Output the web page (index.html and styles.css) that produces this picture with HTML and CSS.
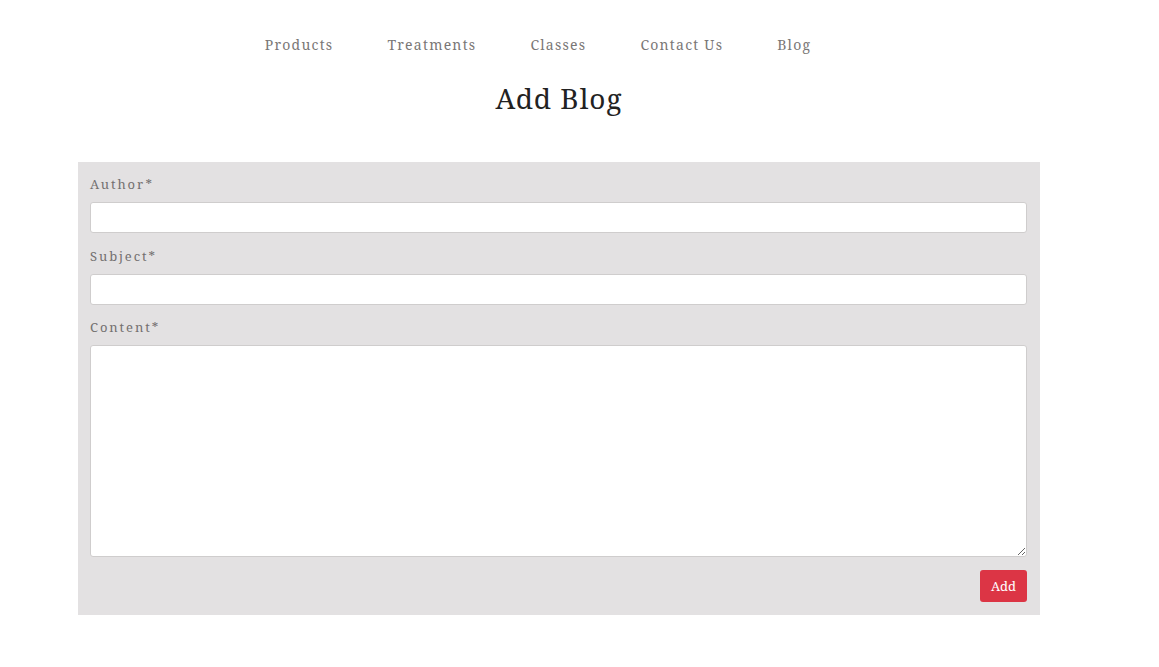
FILE: index.html
```html
<!DOCTYPE html>
<html>
<head>
<meta charset="utf-8">
<link rel="stylesheet" href="styles.css">
</head>
<body>
<div class="page">
  <nav class="nav">
    <a href="#">Products</a>
    <a href="#">Treatments</a>
    <a href="#">Classes</a>
    <a href="#">Contact Us</a>
    <a href="#">Blog</a>
  </nav>
  <h1 class="title">Add Blog</h1>
  <form class="panel">
    <label class="label">Author*</label>
    <input class="field" type="text">
    <label class="label">Subject*</label>
    <input class="field" type="text">
    <label class="label">Content*</label>
    <textarea class="field area"></textarea>
    <div class="actions"><button type="button" class="btn">Add</button></div>
  </form>
</div>
</body>
</html>
```
FILE: styles.css
```css
* { box-sizing: border-box; }
html, body { margin: 0; padding: 0; background: #fff; }
body { font-family: "Noto Serif", "Droid Serif", "DejaVu Serif", serif; }
.page { width: 962px; margin-left: 78px; padding-top: 36px; }
.nav { display: flex; justify-content: center; gap: 54px; padding-right: 42px; }
.nav a { color: #7a7776; text-decoration: none; font-size: 14px; letter-spacing: 1.25px; line-height: 18px; }
.title { margin: 27px 0 0; text-align: center; font-weight: 400; font-size: 28px; line-height: 34px; letter-spacing: 1px; color: #222; }
.panel { margin-top: 47px; background: #e3e1e2; padding: 13px 13px 13px 12px; display: flex; flex-direction: column; }
.label { font-size: 13px; letter-spacing: 1.9px; color: #737070; line-height: 18px; margin-bottom: 9px; }
.field { display: block; width: 100%; height: 31px; border: 1px solid #cfcdcd; border-radius: 3px; background: #fff; margin: 0 0 13.5px; font: inherit; padding: 4px 8px; }
.area { height: 212px; resize: vertical; margin-bottom: 13px; }
.actions { display: flex; justify-content: flex-end; }
.btn { background: #dc3545; color: #fff; border: 0; border-radius: 3px; width: 47px; height: 32px; font-family: inherit; font-size: 13px; padding: 0; }
```
